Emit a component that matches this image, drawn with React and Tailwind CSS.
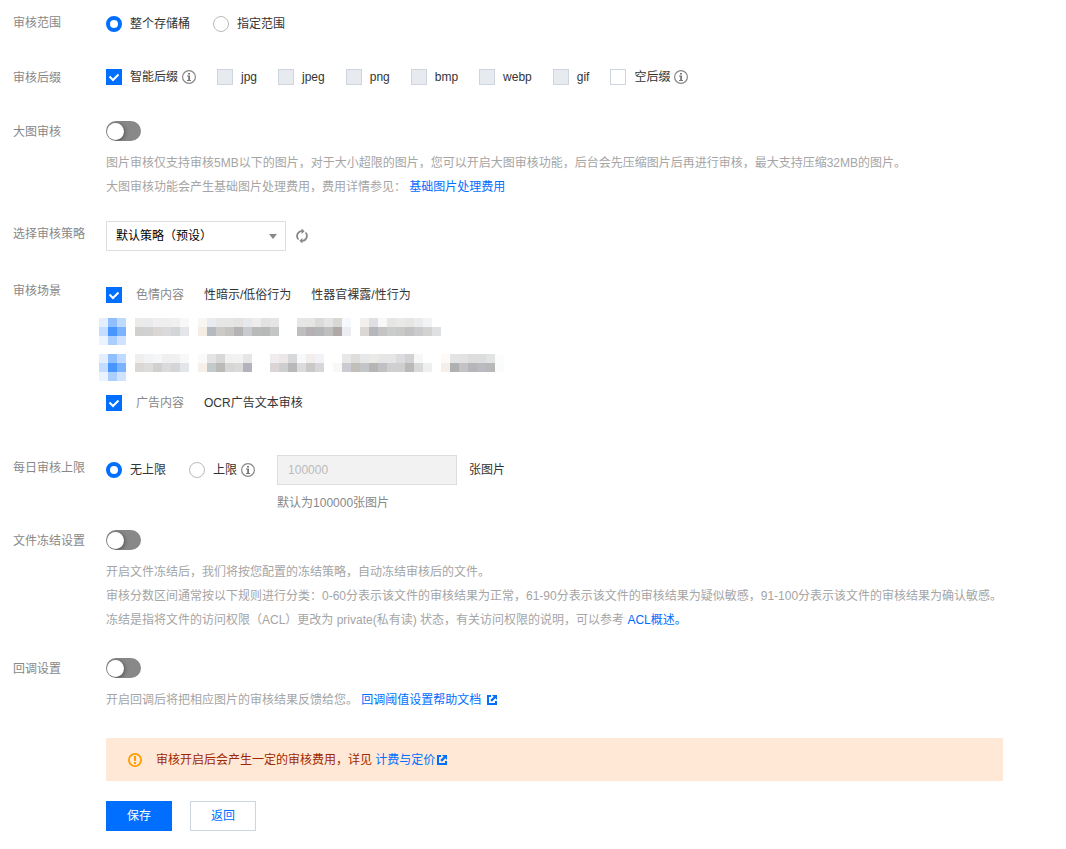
import React, { useState } from 'react';

const suffixes = ['jpg', 'jpeg', 'png', 'bmp', 'webp', 'gif'];

const CELL = 9;

const blueCells = [
    ['#e3efff', '#8fbfff', '#bfdaff'],
    ['#c4dcff', '#4795ff', '#7cb3ff'],
    ['#eaf3ff', '#abceff', '#cfe3ff'],
];

// Each block starts at a column and has an upper and a lower line of cells.
const maskedScenes = [
    [
        {
            col: 4,
            top: ['#ebebe9', '#e9eaeb', '#efefef', '#eeeeee', '#f0f0f0', '#f8f8f8'],
            bottom: ['#d0d0ce', '#d1d1d1', '#dbd5d3', '#dadadc', '#d2d6d6', '#e4e5ea'],
        },
        {
            col: 11,
            top: ['#f8f6f3', '#e9ebf0', '#e6e6e6', '#e6e6e6', '#e4e3e1', '#e6e8ec', '#ededed', '#e2e2e2', '#e5e5e5'],
            bottom: ['#f3ede4', '#b5b9c0', '#cbcac7', '#c4c3c0', '#b5b4b4', '#c8cacf', '#b9babb', '#b7b8b8', '#c4c5c5'],
        },
        {
            col: 22,
            top: ['#e6e6e6', '#e5e6e3', '#d9dcdb', '#e4e4e4', '#d8d8d5', '#f7f8fe'],
            bottom: ['#bfbebc', '#b4b0b4', '#b1b6b6', '#bebebf', '#afaaa8', '#ececf3'],
        },
        {
            col: 29,
            top: ['#f0efed', '#dfe0e4', '#f8f8f8', '#e6e7e4', '#e9e9e9', '#e6e6e5', '#eaebeb', '#f2f3f5'],
            bottom: ['#dbd7d5', '#b6b7bc', '#c5c4c5', '#cbcccc', '#c9c9c7', '#c3c2c2', '#cacacc', '#d2d2d0', '#dfe0e1'],
        },
    ],
    [
        {
            col: 4,
            top: ['#f0efee', '#f2f3f5', '#f5f6f7', '#efefef', '#f0f0f0', '#f8f8f8'],
            bottom: ['#dbd7d4', '#dddcda', '#d0d0ce', '#dadadc', '#d2d6d6', '#e4e5ea'],
        },
        {
            col: 11,
            top: ['#fafafa', '#e4e4e4', '#d8d8d6', '#f0f2f2', '#f2f2f1', '#e6e6e8'],
            bottom: ['#f6f0e8', '#c3cacc', '#bcbab8', '#d6d6d5', '#d9dad9', '#b3b3bd'],
        },
        {
            col: 19,
            top: ['#f1edee', '#ebe8e7', '#d7d8da', '#f8f8f8', '#f2eeed', '#f1f2f5'],
            bottom: ['#dcd5d6', '#cdced0', '#b9b9b9', '#dcdadc', '#c9c9c7', '#d6d6db'],
        },
        {
            col: 26,
            top: ['#ffffff', '#e9e8e8', '#dedddb', '#e5e7e9', '#ebeae7', '#e6e6e6', '#e6e6e6', '#dadce0', '#d2d2d2', '#f6f8f8'],
            bottom: ['#f9f8f6', '#cdcbd2', '#c2beb8', '#c2c6c9', '#b5b5b3', '#c2c0c4', '#cfcfcf', '#cfcfcf', '#bab9b8', '#d9d9d9', '#eeeff1'],
        },
        {
            col: 38,
            top: ['#fdfaf7', '#e4e4e4', '#e3e2e2', '#dddddd', '#dddddd', '#e2e4e4', '#fbfdfd'],
            bottom: ['#f4f0e9', '#afb0b1', '#c5c2c5', '#b6b6b9', '#bbbac0', '#b7b9b8', '#fafcfc'],
        },
    ],
];

function InfoIcon() {
    return (
        <svg className="size-3.5 shrink-0" viewBox="0 0 14 14" fill="none" aria-hidden="true">
            <circle cx="7" cy="7" r="6.4" stroke="#888" strokeWidth="1.2" />
            <path d="M6 3h2v1.500H6zM5 5.600h3V10h1v1H5v-1h1.200V6.600H5z" fill="#777" />
        </svg>
    );
}

function ExternalIcon() {
    return (
        <svg className="size-2.5 shrink-0" viewBox="0 0 10 10" aria-hidden="true">
            <path
                d="M0 0h4v2H2v6h6V6h2v4H0zM5 0h5v5L8.300 3.300 4.900 6.700 3.300 5.100 6.700 1.700z"
                fill="#006eff"
            />
        </svg>
    );
}

function RefreshIcon() {
    return (
        <svg className="h-4 w-3" viewBox="0 0 12 16" fill="none" aria-hidden="true">
            <path
                d="M2.500 11.500A4.900 4.900 0 0 1 6 3.200M9.500 4.500A4.900 4.900 0 0 1 6 12.800"
                stroke="#888"
                strokeWidth="1.800"
            />
            <path d="M5.600 .5 8.600 3.200 5.600 6zM6.400 10v5.500L3.400 12.800z" fill="#888" />
        </svg>
    );
}

function WarningIcon() {
    return (
        <svg className="size-3.5 shrink-0" viewBox="0 0 14 14" fill="none" aria-hidden="true">
            <circle cx="7" cy="7" r="6.100" stroke="#ff9d00" strokeWidth="1.800" />
            <path d="M6 3h2v5H6zM6 9h2v2H6z" fill="#ff9d00" />
        </svg>
    );
}

function Radio({ label, children, ...props }) {
    return (
        <label className="flex items-center">
            <input
                type="radio"
                className="mr-2 size-4 appearance-none rounded-full border border-[#bbb] bg-white checked:border-4 checked:border-[#006eff]"
                {...props}
            />
            {label}
            {children}
        </label>
    );
}

function Checkbox({ label, labelClass = 'ml-2', children, ...props }) {
    return (
        <label className="flex items-center">
            <span className="relative flex size-4 shrink-0">
                <input
                    type="checkbox"
                    className="peer size-4 appearance-none border border-[#cfd5de] bg-white checked:border-[#006eff] checked:bg-[#006eff] disabled:bg-[#e7eaef]"
                    {...props}
                />
                <svg
                    className="pointer-events-none absolute inset-0 hidden size-4 peer-checked:block"
                    viewBox="0 0 16 16"
                    fill="none"
                    aria-hidden="true"
                >
                    <path d="M3.500 7.500 7 11l5.500-5.500" stroke="#fff" strokeWidth="2" />
                </svg>
            </span>
            <span className={labelClass}>{label}</span>
            {children}
        </label>
    );
}

function Switch({ id }) {
    return (
        <div className="flex h-6 items-center">
            <input
                id={id}
                type="checkbox"
                role="switch"
                className="flex h-5 w-[35px] appearance-none items-center overflow-hidden rounded-full bg-[#888] px-px before:size-[17px] before:rounded-full before:bg-white before:shadow-[1px_1px_4px_rgba(0,0,0,0.4)] checked:justify-end checked:bg-[#006eff]"
            />
        </div>
    );
}

function FormRow({ label, htmlFor, className = '', children }) {
    const Label = htmlFor ? 'label' : 'div';

    return (
        <div className={`flex items-start ${className}`}>
            <Label htmlFor={htmlFor} className="w-[93px] shrink-0 leading-[26px] text-[#888]">
                {label}
            </Label>
            <div className="min-w-0 flex-1">{children}</div>
        </div>
    );
}

function HelpText({ children }) {
    return <div className="mt-2 leading-6 text-[#a5a5a5]">{children}</div>;
}

function MaskedScene({ blocks }) {
    return (
        <div className="-ml-[7px] flex h-7 items-end">
            <svg width="405" height="27" viewBox="0 0 405 27" shapeRendering="crispEdges" aria-hidden="true">
                {blueCells.map((line, row) =>
                    line.map((fill, i) => (
                        <rect key={`${row}-${i}`} x={i * CELL} y={row * CELL} width={CELL} height={CELL} fill={fill} />
                    ))
                )}
                {blocks.map(({ col, top, bottom }) =>
                    [top, bottom].map((line, row) =>
                        line.map((fill, i) => (
                            <rect
                                key={`${col}-${row}-${i}`}
                                x={(col + i) * CELL}
                                y={row * CELL}
                                width={CELL}
                                height={CELL}
                                fill={fill}
                            />
                        ))
                    )
                )}
            </svg>
        </div>
    );
}

export default function App() {
    const [scope, setScope] = useState('bucket');
    const [limit, setLimit] = useState('none');

    return (
        <form
            className="bg-white pt-2.5 pr-[63px] pb-4 pl-[13px] font-['Liberation_Sans','Noto_Sans_CJK_SC',sans-serif] text-xs text-[#333]"
            onSubmit={(e) => e.preventDefault()}
        >
            <FormRow label="审核范围">
                <div className="flex h-7 items-center gap-[23px]">
                    <Radio
                        name="scope"
                        label="整个存储桶"
                        checked={scope === 'bucket'}
                        onChange={() => setScope('bucket')}
                    />
                    <Radio
                        name="scope"
                        label="指定范围"
                        checked={scope === 'custom'}
                        onChange={() => setScope('custom')}
                    />
                </div>
            </FormRow>

            <FormRow label="审核后缀" className="mt-[27px]">
                <div className="flex min-h-6 flex-wrap items-center gap-x-[21px]">
                    <Checkbox label="智能后缀" labelClass="ml-2 mr-1" defaultChecked>
                        <InfoIcon />
                    </Checkbox>
                    {suffixes.map((suffix) => (
                        <Checkbox key={suffix} label={suffix} disabled />
                    ))}
                    <Checkbox label="空后缀" labelClass="ml-2 mr-1">
                        <InfoIcon />
                    </Checkbox>
                </div>
            </FormRow>

            <FormRow label="大图审核" htmlFor="large-image" className="mt-7">
                <Switch id="large-image" />
                <HelpText>
                    <p>
                        图片审核仅支持审核5MB以下的图片，对于大小超限的图片，您可以开启大图审核功能，后台会先压缩图片后再进行审核，最大支持压缩32MB的图片。
                    </p>
                    <p>
                        大图审核功能会产生基础图片处理费用，费用详情参见：{' '}
                        <a href="#fees" className="text-[#006eff]">
                            基础图片处理费用
                        </a>
                    </p>
                </HelpText>
            </FormRow>

            <FormRow label="选择审核策略" htmlFor="policy" className="mt-[22px]">
                <div className="flex items-center gap-2.5">
                    <div className="relative">
                        <select
                            id="policy"
                            className="block h-[30px] w-[180px] appearance-none border border-[#ddd] bg-white px-[9px] text-black"
                        >
                            <option>默认策略（预设）</option>
                        </select>
                        <svg
                            className="pointer-events-none absolute top-[13px] right-[9px] h-[5px] w-2"
                            viewBox="0 0 8 5"
                            aria-hidden="true"
                        >
                            <path d="M0 0h8L4 5z" fill="#888" />
                        </svg>
                    </div>
                    <button type="button" aria-label="刷新">
                        <RefreshIcon />
                    </button>
                </div>
            </FormRow>

            <FormRow label="审核场景" className="mt-[27px]">
                <div className="flex flex-col gap-2 pt-[3px]">
                    <div className="flex h-7 items-center gap-5">
                        <Checkbox label="色情内容" labelClass="ml-3.5 text-[#888]" defaultChecked />
                        <span>性暗示/低俗行为</span>
                        <span>性器官裸露/性行为</span>
                    </div>
                    {maskedScenes.map((blocks, i) => (
                        <MaskedScene key={i} blocks={blocks} />
                    ))}
                    <div className="flex h-7 items-center gap-5">
                        <Checkbox label="广告内容" labelClass="ml-3.5 text-[#888]" defaultChecked />
                        <span>OCR广告文本审核</span>
                    </div>
                </div>
            </FormRow>

            <FormRow label="每日审核上限" className="mt-[38px]">
                <div className="flex items-start">
                    <div className="mr-[22px] flex h-[30px] items-center gap-[23px]">
                        <Radio
                            name="limit"
                            label="无上限"
                            checked={limit === 'none'}
                            onChange={() => setLimit('none')}
                        />
                        <Radio
                            name="limit"
                            label="上限"
                            checked={limit === 'custom'}
                            onChange={() => setLimit('custom')}
                        >
                            <span className="ml-1">
                                <InfoIcon />
                            </span>
                        </Radio>
                    </div>
                    <div>
                        <div className="flex items-center gap-3">
                            <input
                                id="daily-limit"
                                type="text"
                                defaultValue="100000"
                                disabled={limit === 'none'}
                                className="h-[30px] w-[180px] border border-[#ddd] bg-white px-2.5 disabled:bg-[#f2f2f2] disabled:text-[#bbb]"
                            />
                            <label htmlFor="daily-limit">张图片</label>
                        </div>
                        <p className="mt-1.5 leading-6 text-[#888]">默认为100000张图片</p>
                    </div>
                </div>
            </FormRow>

            <FormRow label="文件冻结设置" htmlFor="freeze" className="mt-[13px]">
                <Switch id="freeze" />
                <HelpText>
                    <p>开启文件冻结后，我们将按您配置的冻结策略，自动冻结审核后的文件。</p>
                    <p>
                        审核分数区间通常按以下规则进行分类：0-60分表示该文件的审核结果为正常，61-90分表示该文件的审核结果为疑似敏感，91-100分表示该文件的审核结果为确认敏感。
                    </p>
                    <p>
                        冻结是指将文件的访问权限（ACL）更改为 private(私有读) 状态，有关访问权限的说明，可以参考{' '}
                        <a href="#acl" className="text-[#006eff]">
                            ACL概述。
                        </a>
                    </p>
                </HelpText>
            </FormRow>

            <FormRow label="回调设置" htmlFor="callback" className="mt-6">
                <Switch id="callback" />
                <HelpText>
                    <p>
                        开启回调后将把相应图片的审核结果反馈给您。{' '}
                        <a href="#callback-doc" className="inline-flex items-center gap-1.5 text-[#006eff]">
                            回调阈值设置帮助文档
                            <ExternalIcon />
                        </a>
                    </p>
                </HelpText>

                <div className="mt-[26px] flex min-h-[43px] items-center gap-3.5 bg-[#ffe8d5] px-[22px] text-[#a02800]">
                    <WarningIcon />
                    <p>
                        审核开启后会产生一定的审核费用，详见{' '}
                        <a href="#pricing" className="inline-flex items-center gap-0.5 text-[#006eff]">
                            计费与定价
                            <ExternalIcon />
                        </a>
                    </p>
                </div>

                <div className="mt-5 flex gap-[18px]">
                    <button type="submit" className="h-[30px] w-[66px] bg-[#006eff] text-white">
                        保存
                    </button>
                    <button type="button" className="h-[30px] w-[66px] border border-[#cfd5de] bg-white text-[#006eff]">
                        返回
                    </button>
                </div>
            </FormRow>
        </form>
    );
}
